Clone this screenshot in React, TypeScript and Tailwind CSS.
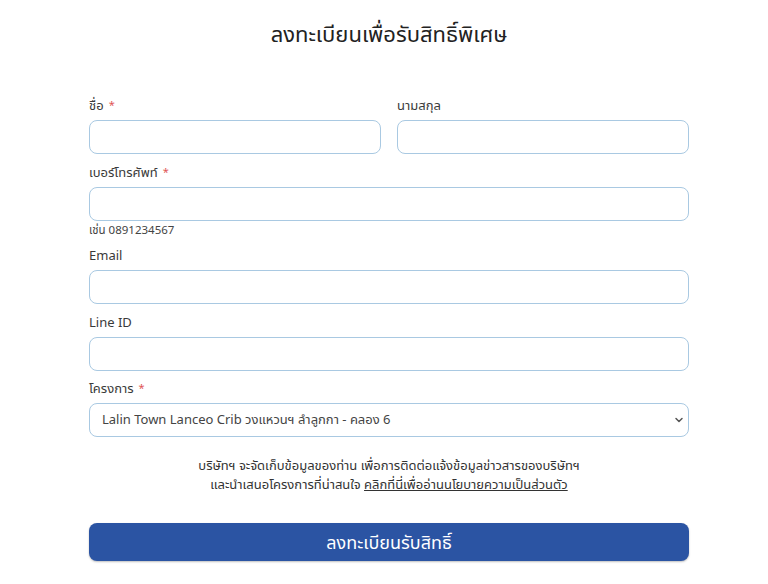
import { ChevronDown } from 'lucide-react'

const font = { fontFamily: '"Noto Sans", "Noto Sans Thai", "Liberation Sans", sans-serif' }

function Label({ text, required }: { text: string; required?: boolean }) {
  return (
    <label className="block text-[13px] leading-[18px] text-[#3a3a3a] mb-[6px]">
      {text}
      {required && <span className="text-[#e05555] text-[11px] ml-[5px] align-[1px]">*</span>}
    </label>
  )
}

function Field() {
  return (
    <input
      type="text"
      className="block w-full h-[34px] rounded-[8px] border border-[#a9c9e2] bg-white px-3 outline-none"
    />
  )
}

export default function App() {
  return (
    <div className="w-[768px] h-[584px] bg-white pl-[89px] pr-[79px] pt-[17px]" style={font}>
      <h1 className="text-center text-[22px] leading-[32px] text-[#222] font-normal">ลงทะเบียนเพื่อรับสิทธิ์พิเศษ</h1>

      <form className="mt-[47px]">
        <div className="grid grid-cols-2 gap-x-[16px]">
          <div>
            <Label text="ชื่อ" required />
            <Field />
          </div>
          <div>
            <Label text="นามสกุล" />
            <Field />
          </div>
        </div>

        <div className="mt-[9px]">
          <Label text="เบอร์โทรศัพท์" required />
          <Field />
          <p className="text-[11.5px] leading-[14px] text-[#444] mt-[2px]">เช่น 0891234567</p>
        </div>

        <div className="mt-[9px]">
          <Label text="Email" />
          <Field />
        </div>

        <div className="mt-[9px]">
          <Label text="Line ID" />
          <Field />
        </div>

        <div className="mt-[8px]">
          <Label text="โครงการ" required />
          <div className="flex items-center h-[34px] rounded-[8px] border border-[#a9c9e2] bg-white pl-[12px] pr-[3px] text-[13px] text-[#444]">
            <span className="flex-1">Lalin Town Lanceo Crib วงแหวนฯ ลำลูกกา - คลอง 6</span>
            <ChevronDown size={12} strokeWidth={3} className="text-[#555]" />
          </div>
        </div>

        <div className="mt-[19px] text-center text-[13px] leading-[19px] text-[#333]">
          <p>บริษัทฯ จะจัดเก็บข้อมูลของท่าน เพื่อการติดต่อแจ้งข้อมูลข่าวสารของบริษัทฯ</p>
          <p>
            และนำเสนอโครงการที่น่าสนใจ{' '}
            <a className="underline text-[#333]">คลิกที่นี่เพื่ออ่านนโยบายความเป็นส่วนตัว</a>
          </p>
        </div>

        <button
          type="button"
          className="mt-[29px] w-full h-[38px] rounded-[8px] bg-[#2b54a3] text-white text-[18px] shadow-[0_1px_2px_rgba(0,0,0,0.25)]"
        >
          ลงทะเบียนรับสิทธิ์
        </button>
      </form>
    </div>
  )
}
